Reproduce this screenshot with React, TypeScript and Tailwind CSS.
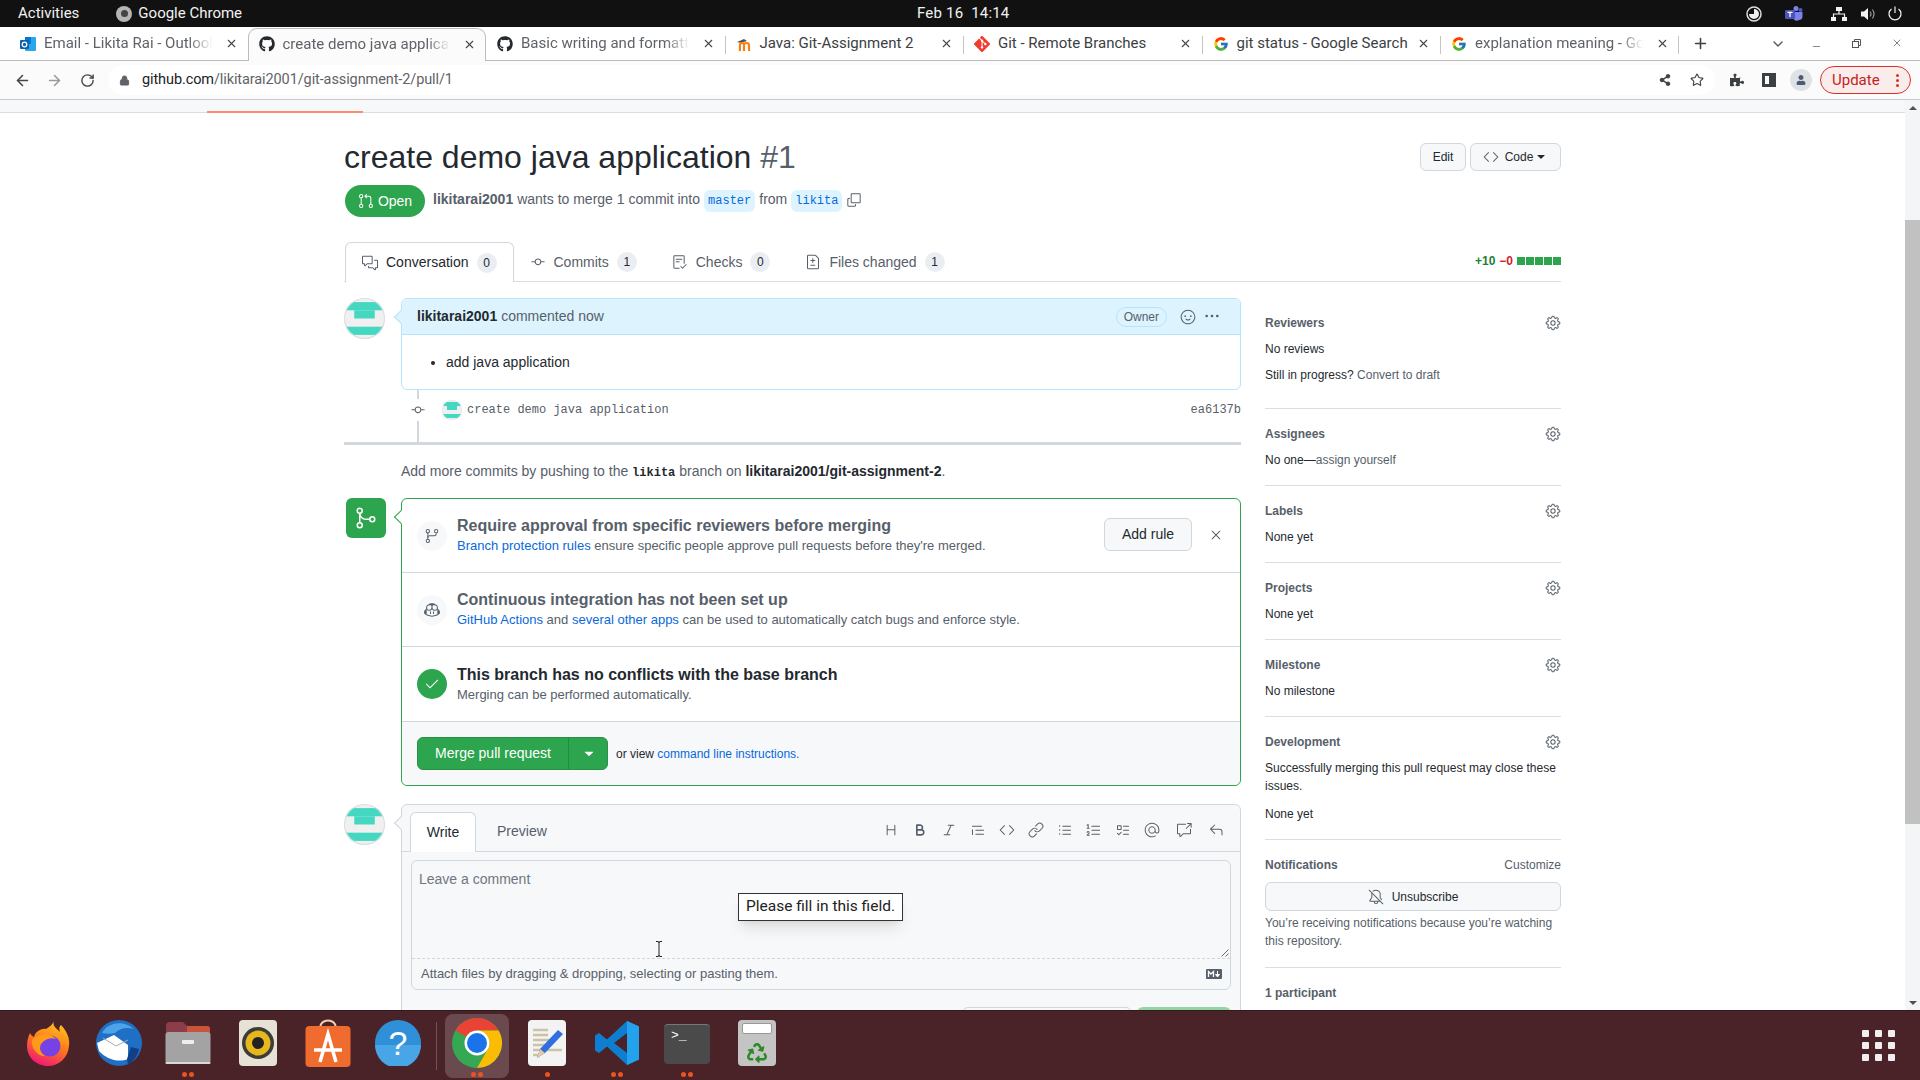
import React from 'react';
import {
  ArrowLeft, ArrowRight, RotateCw, Lock, Star, Plus, ChevronDown, Minus, X,
} from 'lucide-react';
import { FaGithub, FaPuzzlePiece, FaRecycle, FaShareAlt, FaUser } from 'react-icons/fa';
import { FcGoogle } from 'react-icons/fc';
import { SiGit } from 'react-icons/si';
import {
  GoGitPullRequest, GoCommentDiscussion, GoGitCommit, GoChecklist, GoFileDiff, GoCopy, GoGear,
  GoCode, GoGitMerge, GoGitBranch, GoCheck, GoX, GoKebabHorizontal, GoSmiley, GoHeading, GoBold,
  GoItalic, GoQuote, GoLink, GoListUnordered, GoListOrdered, GoTasklist, GoMention,
  GoCrossReference, GoReply, GoBellSlash, GoTriangleDown, GoCopilot,
} from 'react-icons/go';

function OutlookIcon() {
  return (
    <svg width="16" height="16" viewBox="0 0 16 16">
      <rect x="5" y="1" width="11" height="14" rx="1" fill="#28a8ea" />
      <rect x="5" y="1" width="6" height="7" fill="#0078d4" />
      <rect x="0" y="4" width="9" height="9" rx="1" fill="#0f5fb0" />
      <circle cx="4.5" cy="8.5" r="2.3" fill="none" stroke="#fff" strokeWidth="1.3" />
    </svg>
  );
}

function MoodleIcon() {
  return (
    <svg width="16" height="16" viewBox="0 0 16 16">
      <path d="M1 6 L8 3 L11 5 L5 7 Z" fill="#555" />
      <path d="M4 15 V9 Q4 7 6 7 Q8 7 8 9 V15 M8 9 Q8 7 10.500 7 Q13 7 13 9 V15" fill="none" stroke="#f98012" strokeWidth="2.200" />
    </svg>
  );
}

function MarkdownIcon() {
  return (
    <svg width="16" height="10" viewBox="0 0 16 10">
      <rect width="16" height="10" rx="1" fill="#57606a" />
      <path d="M2.500 8 V2.500 L5 5 L7.500 2.500 V8" fill="none" stroke="#fff" strokeWidth="1.300" />
      <path d="M11.500 2 V6 M9.500 5.500 L11.500 8 L13.500 5.500 Z" fill="#fff" stroke="#fff" strokeWidth="1" />
    </svg>
  );
}

const tabs = [
  { title: 'Email - Likita Rai - Outlook', icon: <OutlookIcon />, fade: true },
  { title: 'create demo java applicat', icon: <FaGithub size={16} color="#24292f" />, fade: true, active: true },
  { title: 'Basic writing and formatt', icon: <FaGithub size={16} color="#24292f" />, fade: true },
  { title: 'Java: Git-Assignment 2', icon: <MoodleIcon /> },
  { title: 'Git - Remote Branches', icon: <SiGit size={16} color="#f03c2e" /> },
  { title: 'git status - Google Search', icon: <FcGoogle size={16} /> },
  { title: 'explanation meaning - Go', icon: <FcGoogle size={16} />, fade: true },
];

function TopBar() {
  return (
    <div className="h-[27px] shrink-0 bg-[#111111] text-[#f2f2f2] flex items-center text-[15px] relative">
      <span className="ml-[18px]">Activities</span>
      <span className="ml-[37px] w-[16px] h-[16px] rounded-full bg-[#b5b5b5] flex items-center justify-center">
        <span className="w-[7px] h-[7px] rounded-full bg-[#444444]" />
      </span>
      <span className="ml-[6px]">Google Chrome</span>
      <span className="absolute left-[917px] tracking-[0.2px]">Feb 16&nbsp;&nbsp;14:14</span>
      <div className="ml-auto flex items-center">
        <svg width="16" height="16" viewBox="0 0 16 16">
          <circle cx="8" cy="8" r="7" fill="none" stroke="#ddd" strokeWidth="1.500" />
          <path d="M8 3 A5 5 0 1 1 3 8 L8 8 Z" fill="#eee" />
        </svg>
        <svg className="ml-[23px]" width="18" height="16" viewBox="0 0 18 16">
          <circle cx="11" cy="2.500" r="2.500" fill="#7b83eb" />
          <circle cx="15.500" cy="4" r="2" fill="#5059c9" />
          <path d="M8 6 H17.500 V11 A3.500 3.500 0 0 1 14 14 A4 4 0 0 1 8 12 Z" fill="#7b83eb" />
          <rect x="0" y="4" width="10" height="9" rx="1" fill="#4b53bc" />
          <path d="M2.500 6.300 H7.500 M5 6.300 V11" stroke="#fff" strokeWidth="1.300" />
        </svg>
        <svg className="ml-[28px]" width="16" height="14" viewBox="0 0 16 14" fill="#f2f2f2">
          <rect x="5" y="0" width="6" height="4" />
          <rect x="0" y="10" width="5" height="4" />
          <rect x="11" y="10" width="5" height="4" />
          <path d="M8 4 V7 M2.500 10 V7 H13.500 V10" fill="none" stroke="#f2f2f2" strokeWidth="1.200" />
        </svg>
        <svg className="ml-[14px]" width="15" height="14" viewBox="0 0 15 14">
          <path d="M0 4.500 H3 L7 1 V13 L3 9.500 H0 Z" fill="#f2f2f2" />
          <path d="M9 4.500 Q11 7 9 9.500 M11.500 2.500 Q14.500 7 11.500 11.500" fill="none" stroke="#999" strokeWidth="1.200" />
        </svg>
        <svg className="ml-[12px] mr-[18px]" width="14" height="15" viewBox="0 0 14 15" fill="none" stroke="#f2f2f2" strokeWidth="1.200">
          <path d="M7 0.500 V7" />
          <path d="M3.500 3 A6 6 0 1 0 10.500 3" />
        </svg>
      </div>
    </div>
  );
}

function TabStrip() {
  return (
    <div className="h-[34px] shrink-0 bg-white border-b border-[#bcbcbc] flex items-end pl-[9px] font-['Roboto',sans-serif] relative">
      {tabs.map((tab, i) => (
        <div
          key={tab.title}
          className={
            tab.active
              ? 'w-[238.5px] h-[33px] -mb-px pb-[2px] bg-[#fbfbfb] border border-b-0 border-[#bcbcbc] rounded-t-[9px] flex items-center pl-[10px] pr-[9px] z-10'
              : 'w-[238.5px] h-[33px] flex items-center pl-[11px] pr-[10px] relative'
          }
        >
          {tab.icon}
          <span
            className={
              tab.fade
                ? 'ml-[8px] flex-1 whitespace-nowrap text-[15px] text-[#5f6368] [mask-image:linear-gradient(to_right,black_80%,transparent_93%)]'
                : 'ml-[8px] flex-1 whitespace-nowrap text-[15px] text-[#3c4043]'
            }
          >
            {tab.title}
          </span>
          <X size={13} strokeWidth={2} color="#444746" />
          {i > 2 && <span className="absolute left-0 top-[9px] h-[18px] w-px bg-[#c4c4c4]" />}
          {i === 6 && <span className="absolute right-0 top-[9px] h-[18px] w-px bg-[#c4c4c4]" />}
        </div>
      ))}
      <Plus size={17} strokeWidth={2.2} color="#3c4043" className="ml-[13px] mb-[8px]" />
      <ChevronDown size={16} strokeWidth={2} color="#555" className="absolute left-[1770px] top-[9px]" />
      <Minus size={11} strokeWidth={1.5} color="#555" className="absolute left-[1811px] top-[14px]" />
      <svg className="absolute left-[1852px] top-[12px]" width="9" height="9" viewBox="0 0 9 9" fill="none" stroke="#555">
        <rect x="0.500" y="2.500" width="6" height="6" />
        <path d="M2.500 2.500 V0.500 H8.500 V6.500 H6.500" />
      </svg>
      <X size={12} strokeWidth={1.5} color="#555" className="absolute left-[1891px] top-[10px]" />
    </div>
  );
}

function AddressBar() {
  return (
    <div className="h-[39px] shrink-0 bg-[#fbfbfb] border-b border-[#c8c8c8] flex items-center font-['Roboto',sans-serif]">
      <ArrowLeft size={17} strokeWidth={2.2} color="#444746" className="ml-[14px]" />
      <ArrowRight size={17} strokeWidth={2.2} color="#9a9a9a" className="ml-[15px]" />
      <RotateCw size={15} strokeWidth={2.2} color="#444746" className="ml-[17px]" />
      <div className="ml-[13px] w-[1607px] h-[30px] rounded-full bg-white flex items-center">
        <Lock size={11} fill="#5f6368" color="#5f6368" className="ml-[11px]" />
        <span className="ml-[12px] text-[14.5px] tracking-[-0.1px] text-[#202124]">
          github.com<span className="text-[#5f6368]">/likitarai2001/git-assignment-2/pull/1</span>
        </span>
        <FaShareAlt size={12} color="#444746" className="ml-auto mr-[19px]" />
        <Star size={14} strokeWidth={2} color="#444746" className="mr-[11px]" />
      </div>
      <FaPuzzlePiece size={14} color="#3c4043" className="ml-[15px]" />
      <span className="ml-[18px] w-[14px] h-[14px] border-[3px] border-[#3c4043] border-r-[7px]" />
      <span className="ml-[14px] w-[22px] h-[22px] rounded-full bg-[#dee1e6] flex items-center justify-center">
        <FaUser size={10} color="#4f5b6e" />
      </span>
      <div className="ml-[8px] w-[91px] h-[28px] rounded-full border border-[#d93025] bg-[#faeceb] flex items-center text-[15px] text-[#c5221f]">
        <span className="ml-[11px]">Update</span>
        <span className="ml-auto mr-[11px] flex flex-col gap-[2px]">
          <i className="w-[3px] h-[3px] rounded-full bg-[#d93025]" />
          <i className="w-[3px] h-[3px] rounded-full bg-[#d93025]" />
          <i className="w-[3px] h-[3px] rounded-full bg-[#d93025]" />
        </span>
      </div>
    </div>
  );
}

function Avatar({ size, id }: { size: number; id: string }) {
  return (
    <svg width={size} height={size} viewBox="0 0 40 40" className="shrink-0">
      <clipPath id={id}>
        <circle cx="20" cy="20" r="20" />
      </clipPath>
      <g clipPath={`url(#${id})`}>
        <rect width="40" height="40" fill="#f0f0f0" />
        <rect x="0" y="4" width="40" height="8" fill="#45d8c0" />
        <rect x="10" y="12" width="20" height="8" fill="#45d8c0" />
        <rect x="0" y="28" width="40" height="8" fill="#45d8c0" />
      </g>
      <circle cx="20" cy="20" r="19.500" fill="none" stroke="#d8dee4" />
    </svg>
  );
}

function PrTab({ icon, label, count, active }: { icon: React.ReactNode; label: string; count: string; active?: boolean }) {
  return (
    <div
      className={
        active
          ? 'h-[40px] -mb-px px-[16px] bg-white border border-b-0 border-[#d0d7de] rounded-t-md flex items-center text-[#24292f]'
          : 'h-[40px] -mb-px pl-[16px] pr-[19px] flex items-center text-[#57606a]'
      }
    >
      <span className="text-[#57606a]">{icon}</span>
      <span className="ml-[8px] text-[14px]">{label}</span>
      <span className="ml-[8px] w-[20px] h-[20px] rounded-full bg-[#eaeef2] text-[12px] text-[#24292f] flex items-center justify-center">
        {count}
      </span>
    </div>
  );
}

function CommentBox() {
  return (
    <div className="relative border border-[#b6e3ff] rounded-md">
      <span className="absolute left-[-6px] top-[13px] w-[10px] h-[10px] rotate-45 bg-[#ddf4ff] border-l border-b border-[#b6e3ff]" />
      <div className="h-[36px] bg-[#ddf4ff] rounded-t-md border-b border-[#b6e3ff] flex items-center pl-[15px] pr-[20px] text-[14px] text-[#57606a] relative">
        <b className="text-[#24292f]">likitarai2001</b>
        <span className="ml-[4px]">commented now</span>
        <span className="ml-auto h-[20px] px-[7px] rounded-full border border-[#b6e3ff] text-[12px] flex items-center">Owner</span>
        <GoSmiley size={16} className="ml-[13px]" />
        <GoKebabHorizontal size={16} className="ml-[8px] -mt-[2px]" />
      </div>
      <ul className="h-[54px] list-disc pl-[44px] flex items-center text-[14px] text-[#24292f]">
        <li>add java application</li>
      </ul>
    </div>
  );
}

function CommitRow() {
  return (
    <div className="ml-[73px] h-[52px] border-l-2 border-[#d0d7de] pt-[10px]">
      <div className="h-[20px] flex items-center">
        <span className="-ml-[9px] bg-white py-[3px] text-[#57606a]">
          <GoGitCommit size={16} />
        </span>
        <span className="ml-[16px]">
          <Avatar size={20} id="commit-avatar" />
        </span>
        <span className="ml-[5px] font-['Liberation_Mono',monospace] text-[12px] text-[#57606a]">create demo java application</span>
        <span className="ml-auto font-['Liberation_Mono',monospace] text-[12px] text-[#57606a]">ea6137b</span>
      </div>
    </div>
  );
}

function MergeRow({ icon, title, strong, className, children }: { icon: React.ReactNode; title: string; strong?: boolean; className: string; children: React.ReactNode }) {
  return (
    <div className={`flex items-center pl-[15px] pr-[15px] border-b border-[#d0d7de] ${className}`}>
      <span className={strong ? 'w-[30px] h-[30px] rounded-full bg-[#2da44e] text-white flex items-center justify-center' : 'w-[30px] h-[30px] rounded-full bg-[#f6f8fa] text-[#57606a] flex items-center justify-center'}>
        {icon}
      </span>
      <div className="ml-[10px] flex-1">
        <div className={strong ? 'text-[16px] leading-[20px] font-bold text-[#24292f]' : 'text-[16px] leading-[20px] font-bold text-[#57606a]'}>{title}</div>
        <div className="text-[13px] leading-[18px] mt-[1px] text-[#57606a]">{children}</div>
      </div>
    </div>
  );
}

function MergeBox() {
  return (
    <div className="flex mt-[15px]">
      <div className="w-[57px] shrink-0 pl-[2px]">
        <span className="w-[40px] h-[40px] rounded-md bg-[#2da44e] text-white flex items-center justify-center">
          <GoGitMerge size={24} />
        </span>
      </div>
      <div className="relative flex-1 border border-[#2da44e] rounded-md">
        <span className="absolute left-[-6px] top-[13px] w-[10px] h-[10px] rotate-45 bg-white border-l border-b border-[#2da44e]" />
        <MergeRow icon={<GoGitBranch size={16} />} title="Require approval from specific reviewers before merging" className="h-[74px]">
          <a className="text-[#0969da]">Branch protection rules</a> ensure specific people approve pull requests before they're merged.
        </MergeRow>
        <MergeRow icon={<GoCopilot size={16} />} title="Continuous integration has not been set up" className="h-[74px]">
          <a className="text-[#0969da]">GitHub Actions</a> and <a className="text-[#0969da]">several other apps</a> can be used to automatically catch bugs and enforce style.
        </MergeRow>
        <MergeRow icon={<GoCheck size={16} />} title="This branch has no conflicts with the base branch" strong className="h-[75px]">
          Merging can be performed automatically.
        </MergeRow>
        <div className="absolute right-[15px] top-[19px] flex items-center">
          <span className="h-[33px] w-[88px] rounded-md border border-[#d0d7de] bg-[#f6f8fa] text-[14px] text-[#24292f] flex items-center justify-center">Add rule</span>
          <GoX size={16} className="ml-[16px] mr-[1px] text-[#57606a]" />
        </div>
        <div className="h-[63px] bg-[#f6f8fa] rounded-b-md flex items-center pl-[15px] text-[12px] text-[#24292f]">
          <div className="h-[33px] w-[191px] rounded-md bg-[#2da44e] text-white text-[14px] flex items-center border border-[#2a9147]">
            <span className="w-[151px] h-full flex items-center justify-center border-r border-[#258a41]">Merge pull request</span>
            <GoTriangleDown size={16} className="ml-[12px]" />
          </div>
          <span className="ml-[8px]">
            or view <a className="text-[#0969da]">command line instructions.</a>
          </span>
        </div>
      </div>
    </div>
  );
}

function Editor() {
  const tools = [GoHeading, GoBold, GoItalic, GoQuote, GoCode, GoLink, GoListUnordered, GoListOrdered, GoTasklist, GoMention];
  return (
    <div className="flex mt-[18px]">
      <div className="w-[57px] shrink-0">
        <Avatar size={41} id="editor-avatar" />
      </div>
      <div className="relative flex-1 border border-[#d0d7de] rounded-t-md bg-[#f6f8fa]">
        <span className="absolute left-[-6px] top-[13px] w-[10px] h-[10px] rotate-45 bg-[#f6f8fa] border-l border-b border-[#d0d7de]" />
        <div className="h-[47px] border-b border-[#d0d7de] flex items-end pl-[8px] text-[14px]">
          <span className="w-[66px] h-[40px] -mb-px bg-white border border-b-0 border-[#d0d7de] rounded-t-md text-[#24292f] flex items-center justify-center">Write</span>
          <span className="h-[40px] ml-[21px] text-[#57606a] flex items-center">Preview</span>
          <div className="ml-auto mr-[16px] h-[40px] pb-[2px] flex items-center gap-[13px] text-[#57606a]">
            {tools.map((Tool, i) => (
              <Tool key={i} size={16} />
            ))}
            <GoCrossReference size={16} className="ml-[3px]" />
            <GoReply size={16} className="ml-[3px]" />
          </div>
        </div>
        <div className="mx-[9px] mt-[8px] h-[130px] border border-[#d0d7de] rounded-md text-[#57606a]">
          <div className="relative h-[98px] border-b border-dashed border-[#d0d7de] pl-[7px] pt-[8px] text-[14px] leading-[20px] text-[#6e7781]">
            Leave a comment
            <svg className="absolute right-[1px] bottom-[1px]" width="8" height="8" viewBox="0 0 8 8" stroke="#666">
              <path d="M0.500 7.500 L7.500 0.500 M4.500 7.500 L7.500 4.500" />
            </svg>
          </div>
          <div className="h-[30px] flex items-center pl-[9px] pr-[8px] text-[13px]">
            Attach files by dragging &amp; dropping, selecting or pasting them.
            <span className="ml-auto"><MarkdownIcon /></span>
          </div>
        </div>
        {/* only the top edge of these two buttons shows above the dock */}
        <div className="mt-[17px] mr-[9px] flex justify-end gap-[5px]">
          <span className="w-[170px] h-[32px] rounded-md border border-[#d0d7de] bg-[#f6f8fa]" />
          <span className="w-[94px] h-[32px] rounded-md bg-[#94d3a2]" />
        </div>
      </div>
    </div>
  );
}

function SideSection({ title, children, bottom = 16 }: { title: string; children: React.ReactNode; bottom?: number }) {
  return (
    <div className="pt-[16px] border-b border-[#d8dee4]">
      <div className="h-[18px] flex items-center justify-between font-bold text-[#57606a]">
        <span>{title}</span>
        <GoGear size={16} className="text-[#57606a]" />
      </div>
      <div className={bottom === 24 ? 'mt-[8px] pb-[24px]' : 'mt-[8px] pb-[16px]'}>{children}</div>
    </div>
  );
}

function Sidebar() {
  return (
    <div className="w-[296px] shrink-0 text-[12px] leading-[18px] text-[#24292f]">
      <SideSection title="Reviewers" bottom={24}>
        <div>No reviews</div>
        <div className="mt-[8px]">
          Still in progress? <span className="text-[#57606a]">Convert to draft</span>
        </div>
      </SideSection>
      <SideSection title="Assignees">
        No one—<span className="text-[#57606a]">assign yourself</span>
      </SideSection>
      <SideSection title="Labels">None yet</SideSection>
      <SideSection title="Projects">None yet</SideSection>
      <SideSection title="Milestone">No milestone</SideSection>
      <SideSection title="Development">
        <div>Successfully merging this pull request may close these issues.</div>
        <div className="mt-[10px]">None yet</div>
      </SideSection>
      <div className="pt-[16px] pb-[17px] border-b border-[#d8dee4]">
        <div className="h-[18px] flex items-center justify-between">
          <b className="text-[#57606a]">Notifications</b>
          <span className="text-[#57606a]">Customize</span>
        </div>
        <div className="mt-[8px] h-[29px] rounded-md border border-[#d0d7de] bg-[#f6f8fa] flex items-center justify-center">
          <GoBellSlash size={16} className="text-[#57606a]" />
          <span className="ml-[8px]">Unsubscribe</span>
        </div>
        <div className="mt-[3px] text-[#57606a]">You’re receiving notifications because you’re watching this repository.</div>
      </div>
      <div className="pt-[16px] font-bold text-[#57606a]">1 participant</div>
    </div>
  );
}

function PageContent() {
  return (
    <div className="flex-1 min-w-0 h-full overflow-hidden bg-white font-['Liberation_Sans',Arial,sans-serif]">
      <div className="h-[13px] bg-[#f6f8fa] border-b border-[#d8dee4] flex items-end pl-[207px]">
        <span className="w-[156px] h-[2px] -mb-px bg-[#fd8c73]" />
      </div>
      <div className="w-[1217px] mx-auto">
        <div className="mt-[20px] flex justify-between items-start">
          <h1 className="text-[32px] leading-[48px] text-[#24292f]">
            create demo java application <span className="text-[#57606a]">#1</span>
          </h1>
          <div className="mt-[10px] flex gap-[4px] text-[12px] text-[#24292f]">
            <span className="w-[46px] h-[28px] rounded-md border border-[#d0d7de] bg-[#f6f8fa] flex items-center justify-center">Edit</span>
            <span className="w-[91px] h-[28px] rounded-md border border-[#d0d7de] bg-[#f6f8fa] flex items-center justify-center">
              <GoCode size={16} className="text-[#57606a]" />
              <span className="ml-[6px]">Code</span>
              <GoTriangleDown size={14} className="ml-[1px]" />
            </span>
          </div>
        </div>

        <div className="mt-[4px] h-[32px] flex items-center text-[14px] text-[#57606a]">
          <span className="w-[80px] h-[32px] ml-[1px] rounded-full bg-[#2da44e] text-white flex items-center justify-center">
            <GoGitPullRequest size={16} />
            <span className="ml-[4px]">Open</span>
          </span>
          <div className="ml-[8px] -mt-[3px] flex items-center">
            <b>likitarai2001</b>
            <span className="ml-[4px]">wants to merge 1 commit into</span>
            <span className="ml-[4px] h-[22px] mt-[2px] px-[4px] rounded-md bg-[#ddf4ff] text-[#0969da] font-['Liberation_Mono',monospace] text-[12px] flex items-center">master</span>
            <span className="ml-[4px]">from</span>
            <span className="ml-[4px] h-[22px] mt-[2px] px-[4px] rounded-md bg-[#ddf4ff] text-[#0969da] font-['Liberation_Mono',monospace] text-[12px] flex items-center">likita</span>
            <GoCopy size={16} className="ml-[4px]" />
          </div>
        </div>

        <div className="mt-[25px] h-[40px] border-b border-[#d8dee4] flex items-end justify-between">
          <div className="flex items-end pl-[1px]">
            <PrTab icon={<GoCommentDiscussion size={16} />} label="Conversation" count="0" active />
            <PrTab icon={<GoGitCommit size={16} />} label="Commits" count="1" />
            <PrTab icon={<GoChecklist size={16} />} label="Checks" count="0" />
            <PrTab icon={<GoFileDiff size={16} />} label="Files changed" count="1" />
          </div>
          <div className="h-[40px] flex items-center text-[12px] font-bold">
            <span className="text-[#1a7f37]">+10</span>
            <span className="ml-[4px] text-[#cf222e]">−0</span>
            <span className="ml-[4px] flex gap-px">
              <i className="w-[8px] h-[8px] bg-[#2da44e]" />
              <i className="w-[8px] h-[8px] bg-[#2da44e]" />
              <i className="w-[8px] h-[8px] bg-[#2da44e]" />
              <i className="w-[8px] h-[8px] bg-[#2da44e]" />
              <i className="w-[8px] h-[8px] bg-[#2da44e]" />
            </span>
          </div>
        </div>

        <div className="mt-[16px] flex gap-[24px]">
          <div className="w-[897px] shrink-0">
            <div className="flex">
              <div className="w-[57px] shrink-0">
                <Avatar size={41} id="comment-avatar" />
              </div>
              <div className="flex-1">
                <CommentBox />
              </div>
            </div>
            <CommitRow />
            <div className="h-[3px] bg-[#d0d7de]" />
            <div className="mt-[16px] pl-[57px] text-[14px] leading-[20px] text-[#57606a]">
              Add more commits by pushing to the <b className="font-['Liberation_Mono',monospace] text-[12px] text-[#24292f]">likita</b> branch on <b className="text-[#24292f]">likitarai2001/git-assignment-2</b>.
            </div>
            <MergeBox />
            <Editor />
          </div>
          <Sidebar />
        </div>
      </div>
    </div>
  );
}

function Scrollbar() {
  return (
    <div className="w-[15px] shrink-0 h-full bg-[#f4f5f6] flex flex-col items-center">
      <span className="mt-[6px] w-0 h-0 border-x-[4px] border-x-transparent border-b-[4px] border-b-[#505050]" />
      <span className="mt-[110px] w-full h-[604px] bg-[#c1c1c1]" />
      <span className="mt-auto mb-[5px] w-0 h-0 border-x-[4px] border-x-transparent border-t-[4px] border-t-[#505050]" />
    </div>
  );
}

function Firefox() {
  return (
    <svg width="44" height="46" viewBox="0 0 44 46">
      <defs>
        <linearGradient id="ff" x1="0.700" y1="0" x2="0.300" y2="1">
          <stop offset="0" stopColor="#ffc51f" />
          <stop offset="0.500" stopColor="#ff7a1a" />
          <stop offset="1" stopColor="#f0147a" />
        </linearGradient>
      </defs>
      <path d="M28 0 C26 6 30 8 34 12 C33 8 33 7 35 5 C42 12 44 20 43 26 C42 38 33 46 22 46 C10 46 1 37 1 26 C1 21 2 17 4 13 C5 15 6 16 8 17 C9 12 15 8 20 9 C23 7 27 5 28 0 Z" fill="url(#ff)" />
      <circle cx="24" cy="26" r="10.500" fill="#7542e5" />
      <path d="M6 20 C12 14 24 12 30 19 C24 17 19 19 15 24 C13 28 14 33 19 36 C11 36 5 28 6 20 Z" fill="#ff9a1a" />
    </svg>
  );
}

function Thunderbird() {
  return (
    <svg width="48" height="48" viewBox="0 0 48 48">
      <circle cx="25" cy="24" r="23" fill="#1f6fc4" />
      <path d="M8 14 C14 3 30 1 40 10 C33 8 26 9 21 14 C17 15 12 15 8 14 Z" fill="#4ca3e8" />
      <path d="M3 24 L20 16 L34 26 L34 40 C24 44 12 40 5 32 Z" fill="#fff" />
      <path d="M9 19 L22 27 L34 21" fill="none" stroke="#aab" strokeWidth="1" />
      <path d="M34 46 C40 42 44 36 45 30 L37 28 L33 40 Z" fill="#123f86" />
    </svg>
  );
}

function Files() {
  return (
    <svg width="46" height="44" viewBox="0 0 46 44">
      <path d="M1 5 Q1 1 5 1 H18 L22 5 H42 Q45 5 45 8 V20 H1 Z" fill="#8d3c4a" />
      <path d="M22 5 H42 Q45 5 45 8 V14 H22 Z" fill="#c8553a" />
      <rect x="0.500" y="11" width="45" height="32" rx="3" fill="#a3a3a3" />
      <rect x="0.500" y="41" width="45" height="2" rx="1" fill="#d8d8d8" />
      <rect x="17" y="19" width="12" height="4" rx="1" fill="#eee" />
    </svg>
  );
}

function Rhythmbox() {
  return (
    <svg width="38" height="46" viewBox="0 0 38 46">
      <rect width="38" height="46" rx="4" fill="#e6e2d6" />
      <circle cx="19" cy="23" r="16" fill="#3c3c38" />
      <circle cx="19" cy="23" r="12.500" fill="#e6b81e" />
      <circle cx="19" cy="23" r="6" fill="#222" />
    </svg>
  );
}

function Software() {
  return (
    <svg width="46" height="48" viewBox="0 0 46 48">
      <path d="M15 9 C15 -1 31 -1 31 9" fill="none" stroke="#f2cfa8" strokeWidth="2" />
      <rect x="0.500" y="7" width="45" height="41" rx="4" fill="#ef6b2e" />
      <path d="M15 43 L23 15 L31 43 M9 31 H37" fill="none" stroke="#fff" strokeWidth="3.500" />
    </svg>
  );
}

function Help() {
  return (
    <svg width="46" height="46" viewBox="0 0 46 46">
      <circle cx="23" cy="23" r="23" fill="#2f8fd8" />
      <path d="M0 25 H46 A23 23 0 0 1 0 25 Z" fill="#48a5e6" />
      <text x="23" y="35" textAnchor="middle" fontSize="34" fill="#fff" fontFamily="Liberation Sans">?</text>
    </svg>
  );
}

function ChromeLogo() {
  return (
    <svg width="50" height="50" viewBox="0 0 50 50">
      <circle cx="25" cy="25" r="25" fill="#34a853" />
      <path d="M25 0 A25 25 0 0 1 46.700 12.500 L25 12.500 A12.500 12.500 0 0 0 14.200 18.700 L3.300 12.500 A25 25 0 0 1 25 0 Z" fill="#ea4335" />
      <path d="M46.700 12.500 A25 25 0 0 1 25 50 L35.800 31.300 A12.500 12.500 0 0 0 35.800 18.700 L25 12.500 Z" fill="#fbbc04" />
      <circle cx="25" cy="25" r="12.500" fill="#fff" />
      <circle cx="25" cy="25" r="10" fill="#1a73e8" />
    </svg>
  );
}

function TextEditor() {
  return (
    <svg width="38" height="46" viewBox="0 0 38 46">
      <rect width="38" height="46" rx="4" fill="#f3f3f3" />
      <path d="M5 10 H20 M5 15 H20 M5 20 H24 M5 25 H20 M5 30 H34 M5 35 H10" stroke="#c9c4a8" strokeWidth="2.500" />
      <path d="M30 10 L35 14 L17 33 L9 38 L12 29 Z" fill="#2f6fe0" />
      <path d="M9 38 L12 29 L17 33 Z" fill="#e8c9a0" />
    </svg>
  );
}

function VSCode() {
  return (
    <svg width="46" height="46" viewBox="0 0 46 46">
      <path d="M33 1 L45 6.500 V39.500 L33 45 L13 26.500 L5 33 L1 30.500 V15.500 L5 13 L13 19.500 Z M33 13 L20 23 L33 33 Z" fill="#0e7fd0" fillRule="evenodd" />
      <path d="M33 1 L45 6.500 V39.500 L33 45 Z" fill="#23a3ee" />
    </svg>
  );
}

function Terminal() {
  return (
    <div className="w-[46px] h-[40px] mt-[2px] rounded-[4px] bg-[#4a4a4a] border-t border-[#777] text-white font-['Liberation_Mono',monospace] text-[13px] leading-[15px] pl-[7px] pt-[3px]">
      &gt;_
    </div>
  );
}

function Trash() {
  return (
    <div className="w-[38px] h-[46px] rounded-[4px] bg-[#c4c4c4] flex flex-col items-center pt-[3px]">
      <span className="w-[30px] h-[11px] rounded-[2px] bg-white border border-[#999]" />
      <FaRecycle size={20} color="#2c8a26" className="mt-[9px]" />
    </div>
  );
}

function DockItem({ children, dots = 0, active }: { children: React.ReactNode; dots?: number; active?: boolean }) {
  return (
    <div className={active ? 'w-[64px] mx-[3px] h-[64px] rounded-lg bg-[#6b4a4f] flex flex-col items-center relative' : 'w-[70px] h-[64px] flex flex-col items-center relative'}>
      <div className="h-[58px] flex items-center justify-center">{children}</div>
      <div className="flex gap-[2px] h-[5px]">
        {Array.from({ length: dots }).map((_, i) => (
          <i key={i} className="w-[5px] h-[5px] rounded-full bg-[#e95420]" />
        ))}
      </div>
    </div>
  );
}

function Dock() {
  return (
    <div className="h-[70px] shrink-0 bg-[#4a2329] border-t border-[#35181c] flex items-center pl-[13px] relative">
      <DockItem><Firefox /></DockItem>
      <DockItem><Thunderbird /></DockItem>
      <DockItem dots={2}><Files /></DockItem>
      <DockItem><Rhythmbox /></DockItem>
      <DockItem><Software /></DockItem>
      <DockItem><Help /></DockItem>
      <span className="ml-[3px] mr-[5px] w-px h-[48px] bg-[#6f5358]" />
      <DockItem dots={2} active><ChromeLogo /></DockItem>
      <DockItem dots={1}><TextEditor /></DockItem>
      <DockItem dots={2}><VSCode /></DockItem>
      <DockItem dots={2}><Terminal /></DockItem>
      <DockItem><Trash /></DockItem>
      <div className="ml-auto mr-[25px] grid grid-cols-3 gap-x-[6px] gap-y-[5px]">
        {Array.from({ length: 9 }).map((_, i) => (
          <i key={i} className="w-[7px] h-[7px] rounded-[1px] bg-[#f0eeee]" />
        ))}
      </div>
    </div>
  );
}

export default function App() {
  return (
    <div className="w-[1920px] h-[1080px] overflow-hidden flex flex-col bg-white font-['Roboto',sans-serif]">
      <TopBar />
      <TabStrip />
      <AddressBar />
      <div className="relative flex-1 min-h-0 flex">
        <PageContent />
        <Scrollbar />
        {/* native validation bubble over the textarea */}
        <div className="absolute left-[738px] top-[793px] h-[28px] w-[165px] bg-white border border-[#333] shadow-lg text-[15.5px] text-[#222] flex items-center justify-center font-['Roboto',sans-serif]">
          Please fill in this field.
        </div>
        <svg className="absolute left-[655px] top-[841px]" width="8" height="16" viewBox="0 0 8 16" fill="none" stroke="#222">
          <path d="M1 0.500 H3 Q4 0.500 4 2 V14 Q4 15.500 3 15.500 H1 M7 0.500 H5 Q4 0.500 4 2 M4 14 Q4 15.500 5 15.500 H7" />
        </svg>
      </div>
      <Dock />
    </div>
  );
}
